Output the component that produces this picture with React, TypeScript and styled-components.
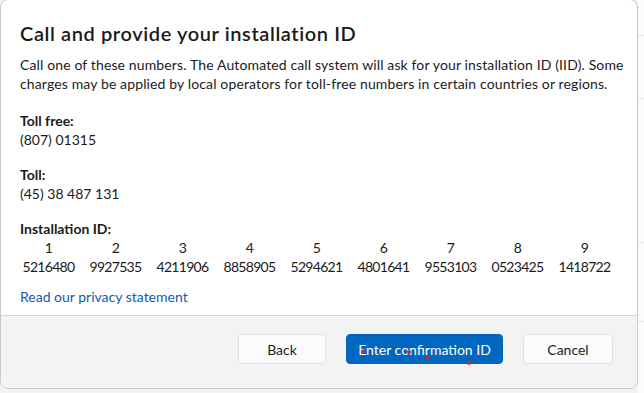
import React from 'react'
import styled, { createGlobalStyle } from 'styled-components'

const GlobalStyle = createGlobalStyle`
  body {
    margin: 0;
    background: #f3f3f3;
    font-family: 'Segoe UI', Lato, 'Liberation Sans', sans-serif;
    color: #1b1b1b;
  }
`

const Screen = styled.div`
  position: relative;
  display: flex;
  width: 644px;
  height: 393px;
  overflow: hidden;
`

const Dialog = styled.div`
  display: flex;
  flex-direction: column;
  width: 638px;
  height: 390px;
  margin-top: -1px;
  box-sizing: border-box;
  background: #ffffff;
  border: 1px solid #c9c9c9;
  border-radius: 8px;
  overflow: hidden;
`

const SideStrip = styled.div`
  flex: 1;
  display: flex;
  flex-direction: column;
  background: #fbfbfb;
`

const SideRow = styled.div<{ $h: number }>`
  height: ${({ $h }) => $h}px;
  border-bottom: 1px solid #e6e6e6;
`

const Body = styled.div`
  flex: 1;
  padding: 19px 12px 0 19px;
`

const Title = styled.h2`
  margin: 0 0 8px;
  font-size: 20px;
  line-height: 28px;
  font-weight: 600;
  letter-spacing: 0.6px;
  color: #1a1a1a;
`

const Text = styled.p`
  margin: 0 0 18px;
  font-size: 14px;
  line-height: 19px;
  letter-spacing: 0.13px;
  white-space: nowrap;
`

const Section = styled.div<{ $gap?: number }>`
  margin-bottom: ${({ $gap = 16 }) => $gap}px;
  font-size: 14px;
  line-height: 19px;
`

const Label = styled.div`
  font-weight: 700;
`

const IdGrid = styled.div`
  display: grid;
  grid-template-columns: repeat(9, 57px);
  column-gap: 10px;
  justify-items: center;
  letter-spacing: -0.7px;
`

const Link = styled.a`
  display: inline-block;
  font-size: 14px;
  line-height: 20px;
  color: #0f5ca8;
  text-decoration: none;
`

const Footer = styled.div`
  display: flex;
  justify-content: flex-end;
  gap: 20px;
  padding: 18px 24px 0 0;
  height: 73px;
  box-sizing: border-box;
  background: #f3f3f3;
  border-top: 1px solid #d6d6d6;
`

const Button = styled.button<{ $w: number; $primary?: boolean }>`
  width: ${({ $w }) => $w}px;
  height: 30px;
  border-radius: 4px;
  font-family: inherit;
  font-size: 14px;
  border: 1px solid ${({ $primary }) => ($primary ? '#0563b8' : '#e3e3e3')};
  background: ${({ $primary }) => ($primary ? '#0067c0' : '#fbfbfb')};
  color: ${({ $primary }) => ($primary ? '#ffffff' : '#1b1b1b')};
`

const Dot = styled.span`
  position: absolute;
  width: 4px;
  height: 4px;
  margin: -2px 0 0 -2px;
  border-radius: 50%;
  background: #e0201c;
`

const ids = ['5216480', '9927535', '4211906', '8858905', '5294621', '4801641', '9553103', '0523425', '1418722']
const dots = [
  [364, 351],
  [409, 352],
  [428, 357],
  [469, 363],
]

const App = () => (
  <Screen>
    <GlobalStyle />
    <Dialog>
      <Body>
        <Title>Call and provide your installation ID</Title>
        <Text>
          Call one of these numbers. The Automated call system will ask for your installation ID (IID). Some
          <br />
          charges may be applied by local operators for toll-free numbers in certain countries or regions.
        </Text>
        <Section>
          <Label>Toll free:</Label>
          <div>(807) 01315</div>
        </Section>
        <Section>
          <Label>Toll:</Label>
          <div>(45) 38 487 131</div>
        </Section>
        <Section $gap={10}>
          <Label>Installation ID:</Label>
          <IdGrid>
            {ids.map((_, i) => (
              <div key={`n${i}`}>{i + 1}</div>
            ))}
            {ids.map((id) => (
              <div key={id}>{id}</div>
            ))}
          </IdGrid>
        </Section>
        <Link href="#">Read our privacy statement</Link>
      </Body>
      <Footer>
        <Button $w={88}>Back</Button>
        <Button $w={157} $primary>
          Enter confirmation ID
        </Button>
        <Button $w={90}>Cancel</Button>
      </Footer>
    </Dialog>
    <SideStrip>
      <SideRow $h={35} />
      <SideRow $h={62} />
      <SideRow $h={143} />
      <SideRow $h={78} />
    </SideStrip>
    {dots.map(([x, y]) => (
      <Dot key={x} style={{ left: x, top: y }} />
    ))}
  </Screen>
)

export default App
